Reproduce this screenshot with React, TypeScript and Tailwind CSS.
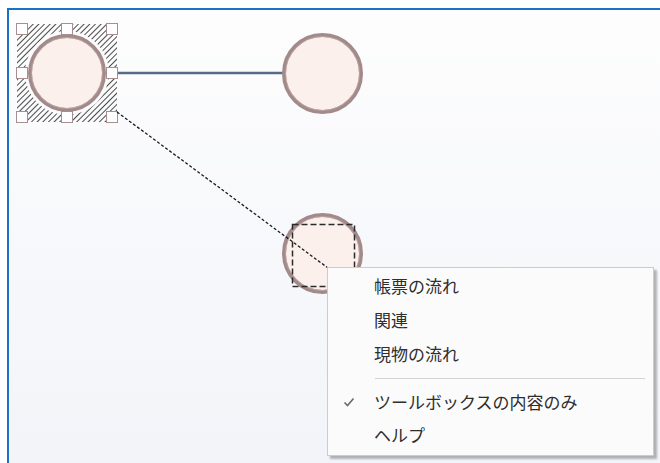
import React from "react";

const Handle = ({ x, y }: { x: number; y: number }) => (
  <rect x={x - 5.5} y={y - 5.5} width={11} height={11} fill="#ffffff" stroke="#a58f8f" strokeWidth={1} />
);

const Node = ({ cx, cy, r }: { cx: number; cy: number; r: number }) => (
  <g>
    <circle cx={cx} cy={cy} r={r - 2} fill="#fbf0eb" stroke="#a38a8a" strokeWidth={4} />
    <circle cx={cx} cy={cy} r={r - 3.5} fill="none" stroke="#c8b3b1" strokeWidth={1} opacity={0.6} />
  </g>
);

const items1 = ["帳票の流れ", "関連", "現物の流れ"];

export default function App() {
  return (
    <div
      className="relative w-[660px] h-[463px] bg-white overflow-hidden flex pt-[8px] pl-[7px]"
      style={{ fontFamily: '"Noto Sans CJK JP", "Noto Sans", sans-serif' }}
    >
      <div className="flex-1 border-t-2 border-l-2 border-[#1a72c6] bg-linear-to-b from-[#fdfdfd] to-[#f2f4f9]" />

      <svg className="absolute left-0 top-0" width={660} height={463} viewBox="0 0 660 463">
        <defs>
          <pattern id="hatch" width="4" height="4" patternUnits="userSpaceOnUse" patternTransform="rotate(45)">
            <line x1="0" y1="0" x2="0" y2="4" stroke="#1e1e1e" strokeWidth="1.6" />
          </pattern>
        </defs>
        {/* connector */}
        <line x1={104} y1={73} x2={284} y2={73} stroke="#586a8b" strokeWidth={2.5} />
        {/* selection hatch */}
        <rect x={17} y={24} width={100} height={98} fill="url(#hatch)" />
        <circle cx={67} cy={73} r={42} fill="#fcfcfc" />
        <Node cx={67} cy={73} r={39} />
        <Handle x={22} y={29} />
        <Handle x={67} y={29} />
        <Handle x={112} y={29} />
        <Handle x={22} y={73} />
        <Handle x={112} y={73} />
        <Handle x={22} y={117} />
        <Handle x={67} y={117} />
        <Handle x={112} y={117} />
        {/* node 2 */}
        <Node cx={322.5} cy={73.5} r={40.5} />
        {/* node 3 */}
        <Node cx={322.5} cy={253.5} r={40.5} />
        {/* dotted drag line */}
        <line x1={117} y1={112} x2={328} y2={268} stroke="#1a1a1a" strokeWidth={1.3} strokeDasharray="3 2" />
        {/* dashed drop rect */}
        <rect x={292.5} y={224.5} width={62} height={62} fill="none" stroke="#2a2a2a" strokeWidth={1.5} strokeDasharray="6 3" />
      </svg>

      {/* context menu */}
      <div className="absolute left-[327px] top-[267px] w-[327px] h-[189px] bg-[#fbfbfb] border border-[#cccccc] shadow-[3px_3px_2px_rgba(0,0,0,0.28)] flex flex-col text-[17px] text-[#2e2e2e]">
        {items1.map((t) => (
          <div key={t} className="h-[34px] flex items-center pl-[46px] leading-none">
            {t}
          </div>
        ))}
        <div className="h-[15px] pt-[8px] pl-[47px] pr-[8px]">
          <div className="h-px w-full bg-[#d4d4d4]" />
        </div>
        <div className="h-[33px] flex items-center leading-none relative pl-[46px]">
          <svg className="absolute left-[15px] top-[12px]" width="12" height="10" viewBox="0 0 12 10">
            <path d="M1.5 5.5 L4.5 8.5 L10.5 1.5" fill="none" stroke="#6a6a6a" strokeWidth="1.6" />
          </svg>
          ツールボックスの内容のみ
        </div>
        <div className="h-[32px] flex items-center pl-[46px] leading-none">ヘルプ</div>
      </div>
    </div>
  );
}
